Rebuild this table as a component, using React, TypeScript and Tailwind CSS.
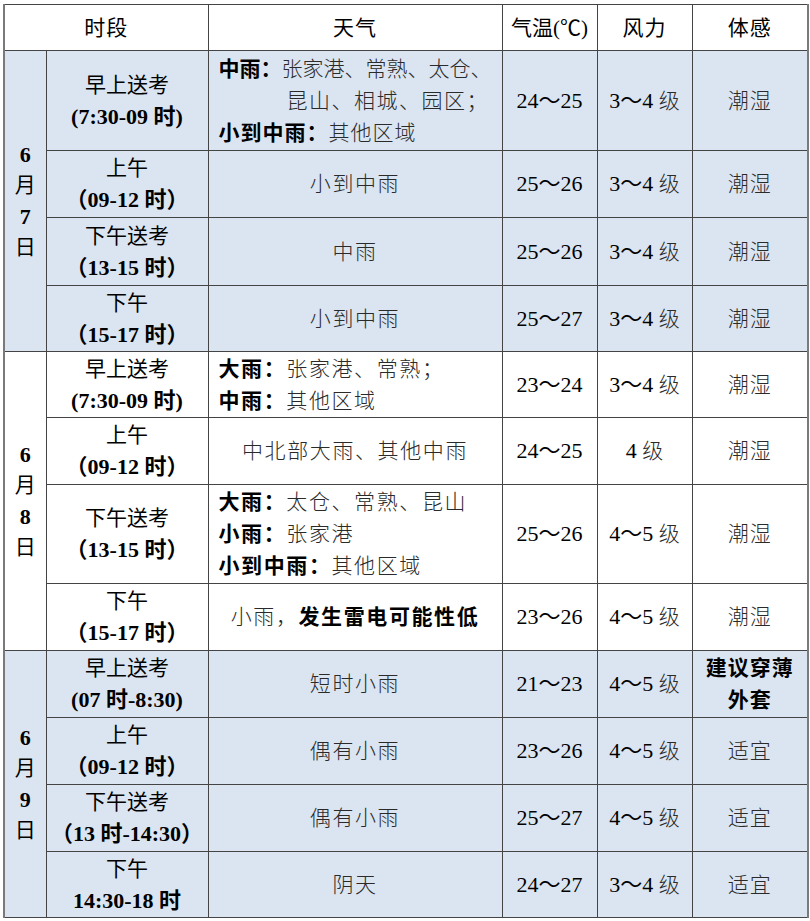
const blue = "bg-[#dbe5f1]";

type Row = {
  slot: string;
  time: string;
  weather: React.ReactNode;
  temp: string;
  wind: string;
  feel: React.ReactNode;
  h: string;
};

const B = ({ children }: { children: React.ReactNode }) => (
  <span className="font-bold text-black">{children}</span>
);

const days: { date: string; bg: string; rows: Row[] }[] = [
  {
    date: "7",
    bg: blue,
    rows: [
      {
        slot: "早上送考",
        time: "(7:30-09 时)",
        weather: (
          <div className="text-left tracking-[0px] pl-[10px]">
            <div>
              <B>中雨：</B>张家港、常熟、太仓、
            </div>
            <div className="pl-[68px] tracking-[1.5px]">昆山、相城、园区；</div>
            <div className="tracking-[1px]">
              <B>小到中雨：</B>其他区域
            </div>
          </div>
        ),
        temp: "24～25",
        wind: "3～4",
        feel: "潮湿",
        h: "h-[100px]",
      },
      { slot: "上午", time: "（09-12 时）", weather: "小到中雨", temp: "25～26", wind: "3～4", feel: "潮湿", h: "h-[67px]" },
      { slot: "下午送考", time: "（13-15 时）", weather: "中雨", temp: "25～26", wind: "3～4", feel: "潮湿", h: "h-[68px]" },
      { slot: "下午", time: "（15-17 时）", weather: "小到中雨", temp: "25～27", wind: "3～4", feel: "潮湿", h: "h-[66px]" },
    ],
  },
  {
    date: "8",
    bg: "bg-white",
    rows: [
      {
        slot: "早上送考",
        time: "(7:30-09 时)",
        weather: (
          <div className="text-left pl-[10px]">
            <div>
              <B>大雨：</B>张家港、常熟；
            </div>
            <div>
              <B>中雨：</B>其他区域
            </div>
          </div>
        ),
        temp: "23～24",
        wind: "3～4",
        feel: "潮湿",
        h: "h-[66px]",
      },
      { slot: "上午", time: "（09-12 时）", weather: "中北部大雨、其他中雨", temp: "24～25", wind: "4", feel: "潮湿", h: "h-[67px]" },
      {
        slot: "下午送考",
        time: "（13-15 时）",
        weather: (
          <div className="text-left pl-[10px]">
            <div>
              <B>大雨：</B>太仓、常熟、昆山
            </div>
            <div>
              <B>小雨：</B>张家港
            </div>
            <div>
              <B>小到中雨：</B>其他区域
            </div>
          </div>
        ),
        temp: "25～26",
        wind: "4～5",
        feel: "潮湿",
        h: "h-[99px]",
      },
      {
        slot: "下午",
        time: "（15-17 时）",
        weather: (
          <span>
            小雨，<B>发生雷电可能性低</B>
          </span>
        ),
        temp: "23～26",
        wind: "4～5",
        feel: "潮湿",
        h: "h-[67px]",
      },
    ],
  },
  {
    date: "9",
    bg: blue,
    rows: [
      {
        slot: "早上送考",
        time: "(07 时-8:30)",
        weather: "短时小雨",
        temp: "21～23",
        wind: "4～5",
        feel: (
          <div className="font-bold text-black tracking-[1px]">
            <div>建议穿薄</div>
            <div>外套</div>
          </div>
        ),
        h: "h-[67px]",
      },
      { slot: "上午", time: "（09-12 时）", weather: "偶有小雨", temp: "23～26", wind: "4～5", feel: "适宜", h: "h-[67px]" },
      { slot: "下午送考", time: "（13 时-14:30）", weather: "偶有小雨", temp: "25～27", wind: "4～5", feel: "适宜", h: "h-[67px]" },
      { slot: "下午", time: "14:30-18 时", weather: "阴天", temp: "24～27", wind: "3～4", feel: "适宜", h: "h-[66px]" },
    ],
  },
];

const cell = "border border-[#444] p-0 text-center align-middle";

export default function App() {
  return (
    <div
      className="bg-white w-[810px] h-[921px] pt-[4px] pl-[3px] text-[21px] leading-[32px] text-[#2a2a2a]"
      style={{ fontFamily: '"Liberation Serif", "Noto Sans CJK SC", serif' }}
    >
      <table className="table-fixed border-collapse w-[804px] border-x-2 border-x-[#7a7a7a]">
        <colgroup>
          <col className="w-[42px]" />
          <col className="w-[162px]" />
          <col className="w-[294px]" />
          <col className="w-[95px]" />
          <col className="w-[95px]" />
          <col className="w-[116px]" />
        </colgroup>
        <thead>
          <tr className="h-[46px] bg-white text-black">
            <th colSpan={2} className={cell + " font-normal tracking-[1px]"}>时段</th>
            <th className={cell + " font-normal tracking-[1px]"}>天气</th>
            <th className={cell + " font-normal"}>气温(℃)</th>
            <th className={cell + " font-normal tracking-[1px]"}>风力</th>
            <th className={cell + " font-normal tracking-[1px]"}>体感</th>
          </tr>
        </thead>
        <tbody>
          {days.map((d) =>
            d.rows.map((r, i) => (
              <tr key={d.date + i} className={r.h + " " + d.bg}>
                {i === 0 && (
                  <td rowSpan={4} className={cell + " leading-[31px] text-black"}>
                    <div className="font-bold text-[22px]">6</div>
                    <div>月</div>
                    <div className="font-bold text-[22px]">{d.date}</div>
                    <div>日</div>
                  </td>
                )}
                <td className={cell + " text-black"}>
                  <div>{r.slot}</div>
                  <div className="font-bold text-[22px]">{r.time}</div>
                </td>
                <td className={cell + " font-light tracking-[1.6px] whitespace-nowrap"}>{r.weather}</td>
                <td className={cell + " text-black text-[22px]"}>{r.temp}</td>
                <td className={cell + " text-black text-[22px]"}>
                  {r.wind} <span className="text-[#2a2a2a] text-[21px] font-light">级</span>
                </td>
                <td className={cell + " font-light tracking-[1px]"}>{r.feel}</td>
              </tr>
            ))
          )}
        </tbody>
      </table>
    </div>
  );
}
